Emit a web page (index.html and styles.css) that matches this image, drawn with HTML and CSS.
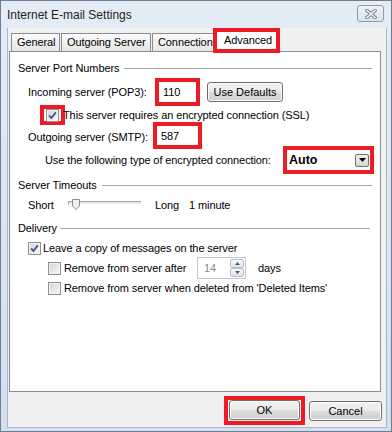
FILE: index.html
```html
<!DOCTYPE html>
<html lang="en">
<head>
    <meta charset="UTF-8">
    <meta name="viewport" content="width=device-width, initial-scale=1.0">
    <title>Internet E-mail Settings</title>
    <link rel="stylesheet" href="styles.css">
</head>
<body>
    <div class="window">
        <div class="titlebar">
            <span class="title">Internet E-mail Settings</span>
            <button class="close" aria-label="Close">
                <svg width="12" height="10" viewBox="0 0 12 10">
                    <path d="M2 1.5 L10 8.5 M10 1.5 L2 8.5" stroke="#6e7b8c" stroke-width="3.4" stroke-linecap="square" fill="none"/>
                    <path d="M2 1.5 L10 8.5 M10 1.5 L2 8.5" stroke="#f4f6f9" stroke-width="1.6" stroke-linecap="square" fill="none"/>
                </svg>
            </button>
        </div>

        <div class="client">
            <div class="tabs">
                <div class="tab tab-general">General</div>
                <div class="tab tab-outgoing">Outgoing Server</div>
                <div class="tab tab-connection">Connection</div>
                <div class="tab tab-active">Advanced</div>
            </div>

            <div class="panel">
                <div class="group group-ports">
                    <span class="group-title">Server Port Numbers</span>
                    <span class="group-line"></span>
                </div>
                <div class="row row-pop">
                    <span class="label-pop">Incoming server (POP3):</span>
                    <span class="port port-pop mark">110</span>
                    <button class="btn btn-defaults">Use Defaults</button>
                </div>
                <div class="row row-ssl">
                    <span class="check-wrap mark">
                        <span class="checkbox">
                            <svg width="11" height="11" viewBox="0 0 11 11"><path d="M2.2 5.4 L4.4 8 L8.8 2.4" stroke="#44588a" stroke-width="1.9" fill="none"/></svg>
                        </span>
                    </span>
                    <span class="ssl-text">This server requires an encrypted connection (SSL)</span>
                </div>
                <div class="row row-smtp">
                    <span class="label-smtp">Outgoing server (SMTP):</span>
                    <span class="port port-smtp mark">587</span>
                </div>
                <div class="row row-enc">
                    <span class="label-enc">Use the following type of encrypted connection:</span>
                    <span class="select mark">
                        <span class="select-value">Auto</span>
                        <span class="select-arrow">
                            <svg width="7" height="4" viewBox="0 0 7 4"><path d="M0 0 H7 L3.5 4 Z" fill="#000"/></svg>
                        </span>
                    </span>
                </div>

                <div class="group group-timeouts">
                    <span class="group-title">Server Timeouts</span>
                    <span class="group-line"></span>
                </div>
                <div class="row row-slider">
                    <span class="slider-short">Short</span>
                    <span class="slider">
                        <span class="slider-track"></span>
                        <svg class="slider-thumb" width="8" height="11" viewBox="0 0 8 11">
                            <path d="M0.5 0.5 H7.5 V7 L4 10.5 L0.5 7 Z" fill="#eef0f2" stroke="#8a8f96"/>
                        </svg>
                    </span>
                    <span class="slider-long">Long</span>
                    <span>1 minute</span>
                </div>

                <div class="group group-delivery">
                    <span class="group-title">Delivery</span>
                    <span class="group-line"></span>
                </div>
                <div class="row check-row">
                    <span class="checkbox">
                        <svg width="11" height="11" viewBox="0 0 11 11"><path d="M2.2 5.4 L4.4 8 L8.8 2.4" stroke="#44588a" stroke-width="1.9" fill="none"/></svg>
                    </span>
                    <span class="check-text">Leave a copy of messages on the server</span>
                </div>
                <div class="row check-row sub">
                    <span class="checkbox"></span>
                    <span class="check-text remove-after">Remove from server after</span>
                    <span class="spinner">
                        <span class="spinner-value">14</span>
                        <span class="spin-btns">
                            <span class="spin-btn"><svg width="5" height="3" viewBox="0 0 5 3"><path d="M0 3 H5 L2.5 0 Z" fill="#4d5d70"/></svg></span>
                            <span class="spin-btn"><svg width="5" height="3" viewBox="0 0 5 3"><path d="M0 0 H5 L2.5 3 Z" fill="#4d5d70"/></svg></span>
                        </span>
                    </span>
                    <span class="days">days</span>
                </div>
                <div class="row check-row sub">
                    <span class="checkbox"></span>
                    <span class="check-text">Remove from server when deleted from 'Deleted Items'</span>
                </div>
            </div>

            <div class="footer">
                <span class="ok-wrap mark">
                    <button class="btn btn-ok">OK</button>
                </span>
                <button class="btn btn-cancel">Cancel</button>
            </div>
        </div>
    </div>
</body>
</html>
```

FILE: styles.css
```css
body {
    margin: 0;
    font-family: 'Liberation Sans', Arial, sans-serif;
    font-size: 11px;
    letter-spacing: -0.1px;
    color: #000;
    background-color: #d5e1ee;
}
.window {
    width: 392px;
    height: 432px;
    box-sizing: border-box;
    border: 1px solid #6b7e96;
    background: linear-gradient(#e4edf6, #d3dfed);
    display: flex;
    flex-direction: column;
}
.titlebar {
    height: 27px;
    flex-shrink: 0;
    display: flex;
    align-items: center;
    justify-content: space-between;
    padding: 0 7px 0 6px;
}
.title {
    font-size: 12px;
    color: #222;
    letter-spacing: 0;
}
.close {
    align-self: flex-start;
    margin-top: 4px;
    width: 27px;
    height: 17px;
    padding: 0;
    border: 1px solid #8d9bae;
    border-radius: 3px;
    background: linear-gradient(#eef3f8, #d9e3ee);
    display: flex;
    align-items: center;
    justify-content: center;
}
.client {
    flex: 1;
    margin: 0 4px 3px 6px;
    background-color: #f0f0f0;
    border-left: 1px solid #a9b8ca;
    border-right: 1px solid #a9b8ca;
    border-bottom: 1px solid #a9b8ca;
    display: flex;
    flex-direction: column;
}
.mark {
    border: 4px solid #ed1c24;
    box-sizing: border-box;
}

/* tabs */
.tabs {
    height: 23px;
    display: flex;
    align-items: flex-end;
    gap: 1px;
    padding-left: 3px;
}
.tab {
    height: 18px;
    box-sizing: border-box;
    border: 1px solid #898c95;
    border-bottom: none;
    background: linear-gradient(#fbfbfb, #e6e6e6);
    padding: 2px 0 0 5px;
}
.tab-general { width: 49px; }
.tab-outgoing { width: 90px; padding-left: 5px; }
.tab-connection { width: 62px; padding-left: 5px; }
.tab-active {
    position: relative;
    z-index: 1;
    width: 67px;
    height: 25px;
    margin-left: -2px;
    margin-bottom: -2px;
    border: 4px solid #ed1c24;
    background: #fff;
    padding: 2px 0 0 7px;
}

/* panel */
.panel {
    margin-left: 1px;
    width: 372px;
    height: 341px;
    box-sizing: border-box;
    border: 1px solid #898c95;
    background-color: #fff;
    padding: 8px 8px 0 8px;
}
.group {
    height: 16px;
    display: flex;
    align-items: center;
}
.group-line {
    flex: 1;
    height: 1px;
    margin-left: 5px;
    background-color: #a5a5a5;
}
.group-timeouts { margin-top: 6px; }
.group-delivery { margin-top: 5px; }
.group-delivery .group-line { margin-left: 3px; margin-right: 2px; }
.row {
    display: flex;
    align-items: center;
    padding-left: 10px;
}
.row-pop { height: 24px; margin-top: 4px; }
.row-ssl { height: 20px; margin-top: 1px; padding-left: 22px; }
.row-smtp { height: 22px; margin-top: 1px; }
.row-enc { height: 22px; margin-top: 1px; padding-left: 27px; }
.row-slider { height: 20px; margin-top: 2px; }
.check-row { height: 20px; }
.row-slider + .group + .check-row { margin-top: 2px; }
.label-pop { width: 127px; flex-shrink: 0; }
.label-smtp { width: 125px; flex-shrink: 0; }
.label-enc { width: 238px; flex-shrink: 0; }
.port {
    flex-shrink: 0;
    background: #fff;
    padding-left: 4px;
    display: flex;
    align-items: center;
}
.port-pop { width: 45px; height: 28px; }
.port-smtp { width: 49px; height: 27px; margin-top: -3px; }
.btn {
    font: inherit;
    color: #000;
    height: 20px;
    padding: 0;
    border: 1px solid #707070;
    border-radius: 3px;
    background: linear-gradient(#f2f2f2 0%, #ebebeb 48%, #dddddd 52%, #cfcfcf 100%);
    box-shadow: inset 0 0 0 1px #fbfbfb;
}
.btn-defaults {
    margin-left: 7px;
    width: 76px;
}

/* checkboxes */
.checkbox {
    width: 13px;
    height: 13px;
    flex-shrink: 0;
    box-sizing: border-box;
    border: 1px solid #8e8f8f;
    background: linear-gradient(135deg, #d3d6da, #f7f7f7);
    box-shadow: inset 0 0 0 1px #f3f3f3;
    display: flex;
    align-items: center;
    justify-content: center;
}
.check-wrap {
    width: 25px;
    height: 20px;
    flex-shrink: 0;
    display: flex;
    align-items: center;
    justify-content: center;
    margin-right: -2px;
}
.check-text { margin-left: 2px; }
.sub { padding-left: 30px; }
.sub .check-text { margin-left: 3px; }
.remove-after { width: 133px; flex-shrink: 0; }

/* dropdown */
.select {
    width: 91px;
    height: 28px;
    flex-shrink: 0;
    display: flex;
    align-items: center;
    justify-content: space-between;
    padding: 0 1px 0 2px;
    background: #fff;
}
.select-value {
    font-size: 12.5px;
    font-weight: bold;
    letter-spacing: 0;
}
.select-arrow {
    width: 14px;
    height: 13px;
    box-sizing: border-box;
    border: 1px solid #707070;
    border-radius: 2px;
    background: linear-gradient(#f2f2f2, #d6d6d6);
    display: flex;
    align-items: center;
    justify-content: center;
}

/* slider */
.slider-short { width: 40px; flex-shrink: 0; }
.slider {
    position: relative;
    width: 73px;
    height: 20px;
    flex-shrink: 0;
    display: flex;
    align-items: center;
    margin-right: 14px;
}
.slider-track {
    width: 100%;
    height: 4px;
    box-sizing: border-box;
    margin-top: -4px;
    border-top: 1px solid #a0a0a0;
    border-left: 1px solid #a0a0a0;
    border-bottom: 1px solid #fff;
    background-color: #e7eaea;
}
.slider-thumb {
    position: absolute;
    left: 4px;
    top: 4px;
}
.slider-long { width: 34px; flex-shrink: 0; }

/* spinner */
.spinner {
    width: 49px;
    height: 22px;
    flex-shrink: 0;
    box-sizing: border-box;
    border: 1px solid #c2c6ca;
    display: flex;
    align-items: center;
    justify-content: space-between;
    padding: 1px 1px 1px 6px;
}
.spinner-value { color: #8c8c8c; }
.spin-btns {
    width: 14px;
    height: 100%;
    display: flex;
    flex-direction: column;
}
.spin-btn {
    flex: 1;
    box-sizing: border-box;
    border: 1px solid #b7c1cb;
    border-radius: 2px;
    background: linear-gradient(#f5f7f9, #dde3e9);
    display: flex;
    align-items: center;
    justify-content: center;
}
.days { margin-left: 12px; }

/* footer */
.footer {
    height: 29px;
    margin-top: 4px;
    display: flex;
    align-items: center;
    justify-content: flex-end;
    gap: 4px;
    padding-right: 4px;
}
.ok-wrap {
    width: 81px;
    height: 29px;
    display: flex;
    align-items: flex-start;
    justify-content: center;
    padding-top: 0;
}
.btn-ok { width: 71px; }
.btn-cancel { width: 73px; }
```
